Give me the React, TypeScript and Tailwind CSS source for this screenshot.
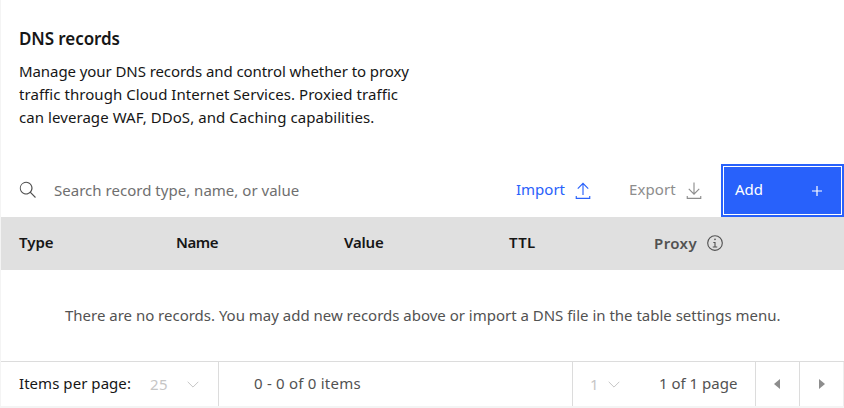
import type { ReactNode } from 'react';

const lines = [
  { text: 'Manage your DNS records and control whether to proxy', spacing: 'tracking-[-0.075px]' },
  { text: 'traffic through Cloud Internet Services. Proxied traffic', spacing: 'tracking-[0.055px]' },
  { text: 'can leverage WAF, DDoS, and Caching capabilities.', spacing: 'tracking-[0.065px]' },
];

function Icon({ className, children }: { className: string; children: ReactNode }) {
  return (
    <svg viewBox="0 0 32 32" fill="currentColor" className={`shrink-0 ${className}`}>
      {children}
    </svg>
  );
}

function Chevron() {
  return (
    <svg viewBox="0 0 12 7" fill="none" stroke="currentColor" className="h-[7px] w-3 shrink-0 text-[#c6c6c6]">
      <path d="M.7.8 6 6.1 11.3.8" />
    </svg>
  );
}

export default function App() {
  return (
    <div className="h-[408px] w-[844px] overflow-hidden border-l border-[#f4f4f4] bg-white font-['Noto_Sans',sans-serif] text-[15px] whitespace-nowrap text-[#161616]">
      <header className="h-[164px] pt-[27px] pl-[18px]">
        <h1 className="text-[17px] leading-6 font-semibold tracking-[-0.08px]">DNS records</h1>
        <div className="mt-[9px] leading-[23px]">
          {lines.map((l) => (
            <p key={l.text} className={l.spacing}>{l.text}</p>
          ))}
        </div>
      </header>

      <div className="flex h-[53px] items-center">
        <Icon className="mb-px ml-[18px] size-[18px] text-[#525252]">
          <path d="M30 28.6 21.5 20A11.3 11.3 0 1 0 20 21.5L28.6 30ZM3 12.5A9.5 9.5 0 1 1 12.5 22 9.5 9.5 0 0 1 3 12.5Z" />
        </Icon>
        <span className="ml-[17px] w-[462px] tracking-[0.02px] text-[#6f6f6f]">Search record type, name, or value</span>
        <button className="flex w-[113px] items-center text-[#2861fb]">
          <span className="w-[58px] pb-0.5 text-left">Import</span>
          <Icon className="mt-px size-[18px]">
            <path d="M6 11 7.4 12.4 15 4.8V23H17V4.8L24.6 12.4 26 11 16 1Z" />
            <path d="M3 25v5h26v-5h-2v3H5v-3Z" />
          </Icon>
        </button>
        <button className="flex w-[92px] items-center text-[#8d8d8d]">
          <span className="w-14 pb-0.5 text-left tracking-[0.1px]">Export</span>
          <Icon className="mt-px size-[18px]">
            <path d="M26 13 24.6 11.6 17 19.2V1H15V19.2L7.4 11.6 6 13 16 23Z" />
            <path d="M3 25v5h26v-5h-2v3H5v-3Z" />
          </Icon>
        </button>
        <button className="h-[53px] w-[123px] bg-[#2861fb] p-0.5 text-white">
          <span className="flex h-[49px] items-center justify-between border border-white pr-[18px] pl-[11px]">
            <span className="pb-0.5">Add</span>
            <svg viewBox="0 0 12 12" className="mt-px size-3 shrink-0" stroke="currentColor" strokeWidth="1.2">
              <path d="M6 1v10M1 6h10" />
            </svg>
          </span>
        </button>
      </div>

      <div className="flex h-[53px] items-center bg-[#e0e0e0] pl-[18px] font-semibold">
        <span className="w-[157px] pb-0.5">Type</span>
        <span className="w-[168px] pb-0.5 tracking-[-0.4px]">Name</span>
        <span className="w-[165px] pb-0.5 tracking-[-0.2px]">Value</span>
        <span className="w-[145px] pb-0.5 tracking-[0.3px]">TTL</span>
        <span className="w-[52px] tracking-[0.4px] text-[#525252]">Proxy</span>
        <Icon className="mb-px size-[18px] text-[#525252]">
          <path d="M17 22V14H13v2h2v6H12v2h8V22ZM16 8a1.5 1.5 0 1 0 1.5 1.5A1.5 1.5 0 0 0 16 8Z" />
          <path d="M16 30A14 14 0 1 1 30 16 14 14 0 0 1 16 30Zm0-26A12 12 0 1 0 28 16 12 12 0 0 0 16 4Z" />
        </Icon>
      </div>

      <div className="flex h-[91px] items-center pl-16 text-[#525252]">
        <span className="tracking-[-0.01px]">There are no records. You may add new records above or import a DNS file in the table settings menu.</span>
      </div>

      <footer className="flex h-[45px] items-stretch border-t border-[#dcdcdc]">
        <div className="flex w-[218px] items-center border-r border-[#dcdcdc] pl-[18px]">
          <span className="w-[131px] pb-0.5 tracking-[0.05px]">Items per page:</span>
          <span className="w-[37px] tracking-[0.5px] text-[#c6c6c6]">25</span>
          <Chevron />
        </div>
        <div className="flex w-[354px] items-center border-r border-[#dcdcdc] pl-[35px] text-[#525252]">
          <span className="pb-0.5 tracking-[0.22px]">0 - 0 of 0 items</span>
        </div>
        <div className="flex w-[183px] items-center border-r border-[#dcdcdc] pl-[17px] text-[#525252]">
          <span className="w-[18px] text-[#c6c6c6]">1</span>
          <Chevron />
          <span className="ml-[39px] pb-0.5">1 of 1 page</span>
        </div>
        <button className="flex w-11 items-center justify-center border-r border-[#dcdcdc] pr-0.5 text-[#8d8d8d]">
          <svg viewBox="0 0 6 10" className="h-2.5 w-1.5" fill="currentColor"><path d="M6 0v10L0 5Z" /></svg>
        </button>
        <button className="flex w-11 items-center justify-center border-r border-[#eeeeee] text-[#8d8d8d]">
          <svg viewBox="0 0 6 10" className="h-2.5 w-1.5" fill="currentColor"><path d="M0 0v10l6-5Z" /></svg>
        </button>
      </footer>
      <div className="h-0.5 bg-[#f4f4f4]" />
    </div>
  );
}
